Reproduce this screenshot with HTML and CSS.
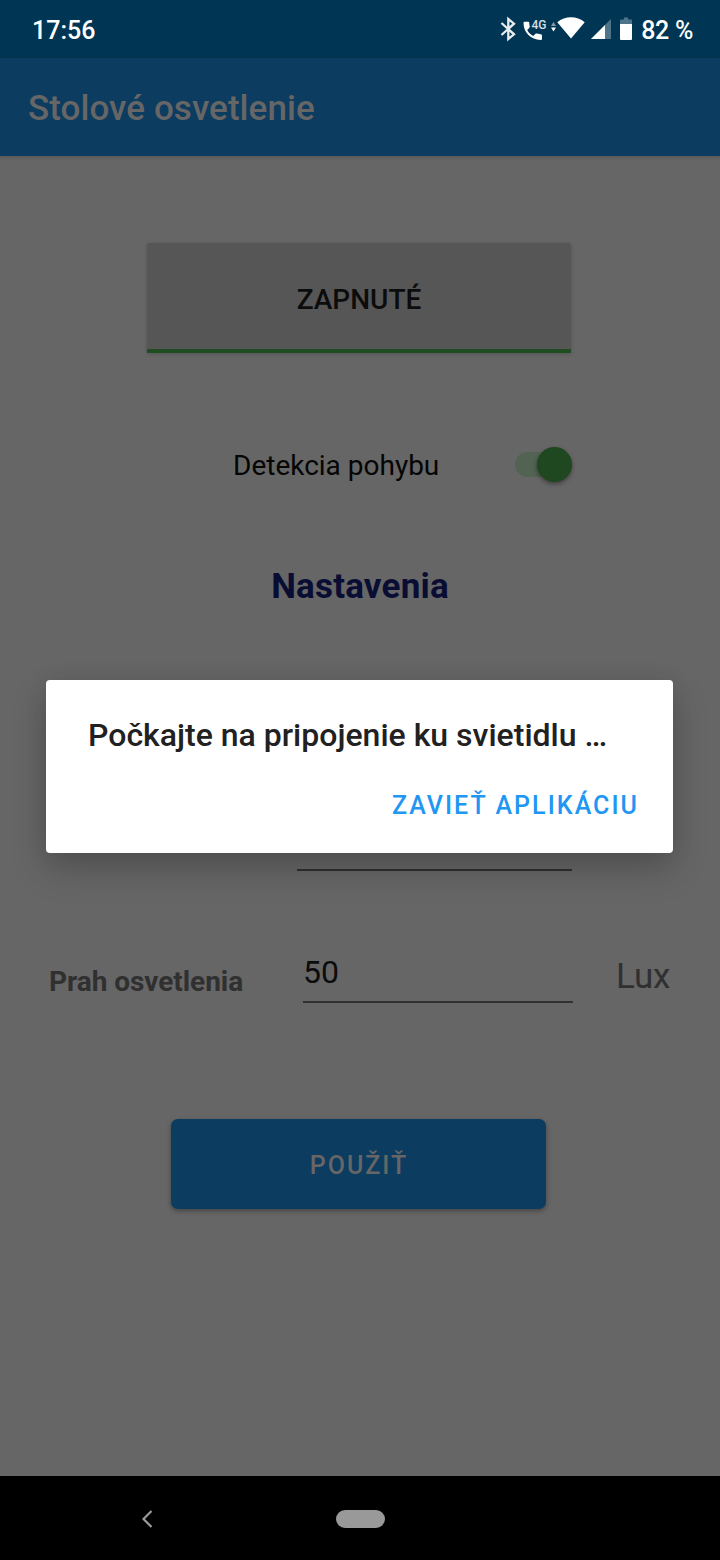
FILE: index.html
```html
<!DOCTYPE html>
<html lang="sk">
<head>
<meta charset="utf-8">
<title>Stolové osvetlenie</title>
<link rel="stylesheet" href="styles.css">
</head>
<body>
<div class="screen">
  <header class="status-bar">
    <span class="clock">17:56</span>
    <div class="status-icons">
      <svg class="bluetooth" width="16" height="24" viewBox="0 0 16 24"><path d="M1.5 6L14 17.3L8.300 22V2L14 6.700L1.500 18" fill="none" stroke="#e6ebee" stroke-width="2.300"/></svg>
      <svg class="call" width="24" height="24" viewBox="0 0 24 24"><path d="M0.5 6C0.5 5 1 4.700 2 4.700H5C6 4.700 6.200 5 6.200 6L6.700 9.500C6.800 10.200 6.600 10.500 6.200 11L4.200 13C5.700 15.800 7.500 17.500 10.300 19L12.300 17C12.800 16.500 13.300 16.500 14 16.600L17.800 17.200C18.600 17.400 19 17.700 19 18.500V21.500C19 22.600 18.500 23 17.500 23C8 22.800 0.500 15.500 0.500 6Z" fill="#fff"/><text x="8.500" y="12" class="network" textLength="15" lengthAdjust="spacingAndGlyphs">4G</text></svg>
      <svg class="data" width="5" height="10" viewBox="0 0 5 10"><path d="M0 4L2.500 0L5 4Z" fill="#809aaa"/><path d="M0 5.500H5L2.500 9.500Z" fill="#fff"/></svg>
      <svg class="wifi" width="28" height="22" viewBox="0 0 28 22"><path d="M0.300 5.200C8 -1.300 20 -1.300 27.700 5.200L14 21.500Z" fill="#fff"/></svg>
      <svg class="signal" width="20" height="20" viewBox="0 0 20 20"><path d="M0 20L20 0V20Z" fill="#4d7488"/><path d="M0 20L14 6V20Z" fill="#fff"/></svg>
      <svg class="battery" width="12" height="23" viewBox="0 0 12 23"><path d="M4 0.500H8V2.500H11Q12 2.500 12 3.500V7H0V3.500Q0 2.500 1 2.500H4Z" fill="#4d7488"/><path d="M0 7H12V22Q12 23 11 23H1Q0 23 0 22Z" fill="#fff"/></svg>
      <span class="percent">82 %</span>
    </div>
  </header>
  <div class="app-bar"><h1 class="app-title">Stolové osvetlenie</h1></div>
  <main class="content">
    <button class="power">ZAPNUTÉ</button>
    <div class="motion">
      <span>Detekcia pohybu</span>
      <span class="switch"><span class="thumb"></span></span>
    </div>
    <h2 class="section-title">Nastavenia</h2>
    <div class="field-hidden"></div>
    <div class="threshold">
      <span class="threshold-label">Prah osvetlenia</span>
      <span class="threshold-input">50</span>
      <span class="threshold-unit">Lux</span>
    </div>
    <button class="apply">POUŽIŤ</button>
  </main>
  <nav class="nav-bar">
    <svg class="back" width="12" height="18" viewBox="0 0 12 18"><path d="M10.500 1L2.500 9L10.500 17" fill="none" stroke="#999" stroke-width="2.200"/></svg>
    <span class="home"></span>
  </nav>
  <section class="dialog" role="dialog">
    <p class="dialog-title">Počkajte na pripojenie ku svietidlu …</p>
    <button class="dialog-action">ZAVIEŤ APLIKÁCIU</button>
  </section>
</div>
</body>
</html>
```
FILE: styles.css
```css
* { box-sizing: border-box; }
body { margin: 0; font-family: Roboto, "Liberation Sans", sans-serif; }
button { border: 0; padding: 0; font: inherit; }
h1, h2, p { margin: 0; }
svg { display: block; overflow: visible; }

.screen {
  position: relative;
  width: 720px;
  height: 1560px;
  display: flex;
  flex-direction: column;
  overflow: hidden;
  background: #666;
}

.status-bar {
  height: 58px;
  padding: 2px 27px 0 32px;
  display: flex;
  align-items: center;
  justify-content: space-between;
  background: #003653;
  color: #fff;
  font-size: 25px;
  font-weight: 500;
  line-height: 58px;
}
.clock { padding-top: 2px; }
.status-icons { display: flex; align-items: center; }
.bluetooth { margin-right: 7px; margin-top: -2px; }
.call { margin-right: 4px; margin-top: -2px; }
.network { font-size: 13px; font-weight: 500; line-height: 13px; fill: #d5dfe5; }
.data { margin-right: 1px; margin-top: -7px; }
.wifi { margin-right: 6px; margin-top: -5px; }
.signal { margin-right: 9px; margin-top: -2px; }
.battery { margin-right: 9px; margin-top: -3px; }
.percent { padding-top: 2px; letter-spacing: -.3px; }

.app-bar {
  position: relative;
  height: 98px;
  padding: 0 28px;
  display: flex;
  align-items: center;
  background: #0d3c61;
  box-shadow: 0 1px 4px rgba(0, 0, 0, .2);
}
.app-title { font-size: 35px; font-weight: 500; color: #666; line-height: 42px; padding-top: 4px; letter-spacing: .06px; }

.content {
  flex: 1;
  display: flex;
  flex-direction: column;
  align-items: flex-start;
  padding-top: 87px;
}
.power {
  width: 424px;
  height: 110px;
  margin-left: 147px;
  padding-top: 7px;
  border-bottom: 4px solid #1f4d22;
  border-radius: 3px 3px 0 0;
  background: #565656;
  box-shadow: 0 1px 4px rgba(0, 0, 0, .18);
  color: #0c0c0c;
  font-size: 28px;
  font-weight: 500;
}
.motion {
  width: 339px;
  height: 40px;
  margin: 92px 0 0 233px;
  display: flex;
  align-items: center;
  justify-content: space-between;
  font-size: 28px;
  color: #050505;
}
.switch {
  width: 57px;
  height: 25px;
  margin-bottom: 2px;
  display: flex;
  align-items: center;
  justify-content: flex-end;
  border-radius: 13px;
  background: #526253;
}
.thumb { width: 35px; height: 35px; border-radius: 50%; background: #1f4720; box-shadow: 0 2px 4px rgba(0, 0, 0, .4); }
.section-title {
  align-self: center;
  margin-top: 81px;
  font-size: 35px;
  font-weight: 700;
  line-height: 42px;
  letter-spacing: .2px;
  color: #0a0d33;
}
.field-hidden { width: 275px; height: 60px; margin: 203px 0 0 297px; border-bottom: 2px solid #303030; }
.threshold {
  height: 57px;
  margin-top: 75px;
  padding-left: 49px;
  display: flex;
  align-items: flex-start;
  color: #303030;
  width: 100%;
}
.threshold-label { width: 254px; padding-top: 17px; font-size: 28px; font-weight: 700; line-height: 38px; letter-spacing: -.05px; }
.threshold-input { width: 270px; height: 57px; border-bottom: 2px solid #303030; font-size: 32px; line-height: 53px; color: #0c0c0c; }
.threshold-unit { margin-left: 43px; padding-top: 10px; font-size: 35px; line-height: 42px; letter-spacing: -.2px; }
.apply {
  width: 375px;
  height: 90px;
  margin: 116px 0 0 171px;
  padding: 3px 0 0 1px;
  border-radius: 7px;
  background: #0d3c61;
  box-shadow: 0 2px 5px rgba(0, 0, 0, .35);
  color: #666;
  font-size: 25px;
  font-weight: 500;
  letter-spacing: 2px;
}

.nav-bar { height: 84px; display: flex; align-items: center; background: #000; }
.back { margin-left: 141px; margin-top: 1px; }
.home { width: 49px; height: 18px; margin: 1px 0 0 183px; border-radius: 9px; background: #999; }

.dialog {
  position: absolute;
  left: 46px;
  top: 680px;
  width: 627px;
  height: 173px;
  padding: 35px 34px 0 42px;
  display: flex;
  flex-direction: column;
  border-radius: 4px;
  background: #fff;
  box-shadow: 0 16px 36px rgba(0, 0, 0, .2), 0 2px 22px rgba(0, 0, 0, .08);
}
.dialog-title { font-size: 32px; font-weight: 500; line-height: 40px; color: #212121; white-space: nowrap; }
.dialog-action {
  align-self: flex-end;
  margin-top: 33px;
  background: transparent;
  color: #2196f3;
  font-size: 25px;
  font-weight: 500;
  line-height: 36px;
  letter-spacing: 2.05px;
}
```
